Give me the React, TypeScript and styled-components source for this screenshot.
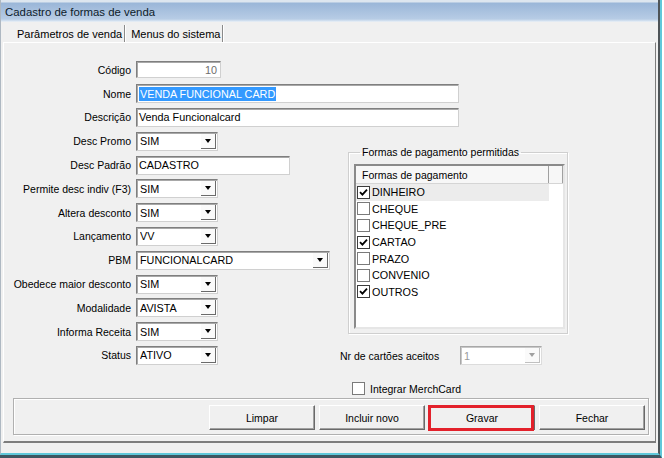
import React from "react";
import styled, { createGlobalStyle } from "styled-components";

const GlobalStyle = createGlobalStyle`
  html, body { margin: 0; padding: 0; background: #ffffff; }
  body { font-family: "Liberation Sans", Arial, sans-serif; font-size: 10.5px; color: #000; }
  * { box-sizing: border-box; }
`;

const Window = styled.div`
  width: 664px;
  height: 458px;
  background: #ffffff;
  padding-right: 2px;
  overflow: hidden;
`;

const Frame = styled.div`
  width: 662px;
  height: 458px;
  border-right: 2px solid #5fc8da;
  border-bottom: 3px solid #3d5661;
`;

const Body = styled.div`
  height: 100%;
  display: flex;
  flex-direction: column;
  background: #f0f0f0;
  border-left: 1px solid #aeb8c2;
  border-right: 2px solid #4e5458;
  border-bottom: 2px solid #5fc8da;
`;

const TitleBar = styled.div`
  height: 22px;
  flex: none;
  display: flex;
  align-items: center;
  padding-left: 4px;
  padding-top: 2px;
  font-size: 11.4px;
  color: #0d1b2a;
  background: linear-gradient(to bottom, #dde6ef 0, #dde6ef 2px, #9ab6d8 3px, #b7cce5 19px, #d6e3f1 21px, #eef2f6 22px);
`;

const TabStrip = styled.div`
  height: 20px;
  flex: none;
  display: flex;
  align-items: flex-end;
  padding-left: 4px;
`;

const Tab = styled.div<{ $pad: number }>`
  height: 17px;
  display: flex;
  align-items: center;
  padding-left: ${(p) => p.$pad}px;
  padding-right: 2px;
  border-right: 1px solid #8a8a8a;
  box-shadow: 1px 0 0 #ffffff;
  margin-right: 2px;
  white-space: nowrap;
  font-size: 11px;
`;

const TabPanel = styled.div`
  flex: 1;
  margin: 0 2px 10px 2px;
  display: flex;
  flex-direction: column;
  border-top: 1px solid #ffffff;
  border-left: 1px solid #ffffff;
  border-right: 1px solid #7d7d7d;
  border-bottom: 2px solid #7d7d7d;
`;

const Content = styled.div`
  flex: 1;
  display: flex;
`;

const FormColumn = styled.div`
  width: 336px;
  flex: none;
  padding-top: 15px;
  display: flex;
  flex-direction: column;
`;

const Row = styled.div`
  height: 23.8px;
  display: flex;
  align-items: center;
`;

const Label = styled.div`
  width: 127px;
  flex: none;
  text-align: right;
  margin-right: 5px;
  white-space: nowrap;
`;

const Field = styled.div<{ $w: number; $h?: number; $muted?: boolean; $right?: boolean }>`
  width: ${(p) => p.$w}px;
  height: ${(p) => p.$h ?? 19}px;
  flex: none;
  background: #ffffff;
  border: 1px solid;
  border-color: #7f7f7f #d0d0d0 #d0d0d0 #7f7f7f;
  box-shadow: inset 1px 1px 0 #a8a8a8;
  display: flex;
  align-items: center;
  justify-content: ${(p) => (p.$right ? "flex-end" : "flex-start")};
  padding: 0 3px 0 2px;
  font-size: 10.8px;
  color: ${(p) => (p.$muted ? "#6d6d6d" : "#000")};
  white-space: nowrap;
  overflow: hidden;
`;

const Selected = styled.span`
  background: #3399ff;
  color: #ffffff;
  padding: 0 1px;
  line-height: 14px;
`;

const Combo = styled.div<{ $w: number; $disabled?: boolean }>`
  width: ${(p) => p.$w}px;
  height: 19px;
  flex: none;
  background: #ffffff;
  border: 1px solid;
  border-color: ${(p) => (p.$disabled ? "#a8a8a8 #dcdcdc #dcdcdc #a8a8a8" : "#7f7f7f #d0d0d0 #d0d0d0 #7f7f7f")};
  box-shadow: inset 1px 1px 0 ${(p) => (p.$disabled ? "#c8c8c8" : "#a8a8a8")};
  display: flex;
  align-items: center;
  padding: 1px 1px 1px 3px;
  font-size: 10.8px;
  color: ${(p) => (p.$disabled ? "#9a9a9a" : "#000")};
`;

const ComboValue = styled.div`
  flex: 1;
  white-space: nowrap;
  overflow: hidden;
`;

const DropButton = styled.div<{ $disabled?: boolean }>`
  width: 15px;
  height: 15px;
  flex: none;
  display: flex;
  align-items: center;
  justify-content: center;
  background: #fafafa;
  border-right: 1px solid ${(p) => (p.$disabled ? "#c0c0c0" : "#6a6a6a")};
  border-bottom: 1px solid ${(p) => (p.$disabled ? "#c0c0c0" : "#6a6a6a")};
`;

const Arrow = styled.div<{ $disabled?: boolean }>`
  width: 0;
  height: 0;
  border-left: 3.5px solid transparent;
  border-right: 3.5px solid transparent;
  border-top: 4px solid ${(p) => (p.$disabled ? "#a0a0a0" : "#000")};
`;

const SideColumn = styled.div`
  flex: 1;
  display: flex;
  flex-direction: column;
`;

const Group = styled.fieldset`
  margin: 102px 0 0 8px;
  width: 220px;
  height: 189px;
  padding: 5px 2px 4px 5px;
  border: 1px solid #cfcfcf;
  box-shadow: inset 1px 1px 0 #ffffff, 1px 1px 0 #ffffff;
`;

const Legend = styled.legend`
  padding: 0 2px;
  margin-left: 6px;
  line-height: 14px;
`;

const ListView = styled.div`
  width: 211px;
  height: 165px;
  background: #ffffff;
  border: 2px solid;
  border-color: #8a8a8a #e6e6e6 #e6e6e6 #8a8a8a;
  display: flex;
  flex-direction: column;
`;

const ListHeader = styled.div`
  height: 18px;
  flex: none;
  display: flex;
  background: #f7f7f7;
  border-bottom: 1px solid #d5d5d5;
`;

const HeaderCell = styled.div<{ $w?: number }>`
  ${(p) => (p.$w ? `width: ${p.$w}px; flex: none;` : "flex: 1;")}
  display: flex;
  align-items: center;
  padding-left: 6px;
  border-right: 1px solid #a0a0a0;
`;

const ListRow = styled.div<{ $hl?: boolean }>`
  height: 16.6px;
  width: 193px;
  display: flex;
  align-items: center;
  padding-left: 1px;
  background: ${(p) => (p.$hl ? "#ececec" : "transparent")};
`;

const CheckBox = styled.div<{ $checked?: boolean }>`
  width: 13px;
  height: 13px;
  flex: none;
  background: #ffffff;
  border: 1px solid ${(p) => (p.$checked ? "#3c3c3c" : "#7a7a7a")};
  display: flex;
  align-items: center;
  justify-content: center;
  margin-right: 2px;
`;

const ItemText = styled.span`
  line-height: 14px;
  font-size: 10.8px;
`;

const CardsRow = styled.div`
  margin-top: 12px;
  display: flex;
  align-items: center;
`;

const CardsLabel = styled.div`
  width: 120px;
  flex: none;
  white-space: nowrap;
`;

const MerchRow = styled.div`
  margin-top: 17px;
  margin-left: 12px;
  display: flex;
  align-items: center;
  gap: 3px;
`;

const ButtonBar = styled.div`
  flex: none;
  height: 37px;
  margin: 0 6px 6px 9px;
  display: flex;
  justify-content: flex-end;
  gap: 4px;
  padding: 6px 3px 4px 3px;
  border: 1px solid #b0b0b0;
  box-shadow: inset 1px 1px 0 #ffffff, 1px 1px 0 #ffffff;
`;

const Button = styled.div`
  position: relative;
  width: 106px;
  height: 25px;
  display: flex;
  align-items: center;
  justify-content: center;
  background: #f0f0f0;
  border: 1px solid;
  border-color: #ffffff #6a6a6a #6a6a6a #ffffff;
  box-shadow: inset -1px -1px 0 #a0a0a0;
`;

const Highlight = styled.div`
  position: absolute;
  left: -2px;
  top: -1px;
  right: 0px;
  bottom: -2px;
  border: 3px solid #e3212b;
  pointer-events: none;
`;

const Check = () => (
  <svg width="9" height="9" viewBox="0 0 9 9">
    <path d="M1 4.2 L3.4 6.6 L8 1.6" fill="none" stroke="#000" strokeWidth="1.8" />
  </svg>
);

const DropDown = ({ w, value, disabled }: { w: number; value: string; disabled?: boolean }) => (
  <Combo $w={w} $disabled={disabled}>
    <ComboValue>{value}</ComboValue>
    <DropButton $disabled={disabled}>
      <Arrow $disabled={disabled} />
    </DropButton>
  </Combo>
);

const payments: { name: string; checked: boolean }[] = [
  { name: "DINHEIRO", checked: true },
  { name: "CHEQUE", checked: false },
  { name: "CHEQUE_PRE", checked: false },
  { name: "CARTAO", checked: true },
  { name: "PRAZO", checked: false },
  { name: "CONVENIO", checked: false },
  { name: "OUTROS", checked: true },
];

const combos: { label: string; value: string; w: number }[] = [
  { label: "Permite desc indiv (F3)", value: "SIM", w: 82 },
  { label: "Altera desconto", value: "SIM", w: 82 },
  { label: "Lançamento", value: "VV", w: 82 },
  { label: "PBM", value: "FUNCIONALCARD", w: 194 },
  { label: "Obedece maior desconto", value: "SIM", w: 82 },
  { label: "Modalidade", value: "AVISTA", w: 82 },
  { label: "Informa Receita", value: "SIM", w: 82 },
  { label: "Status", value: "ATIVO", w: 82 },
];

export default function App() {
  return (
    <>
      <GlobalStyle />
      <Window>
        <Frame>
          <Body>
            <TitleBar>Cadastro de formas de venda</TitleBar>
            <TabStrip>
              <Tab $pad={12}>Parâmetros de venda</Tab>
              <Tab $pad={4}>Menus do sistema</Tab>
            </TabStrip>
            <TabPanel>
              <Content>
                <FormColumn>
                  <Row>
                    <Label>Código</Label>
                    <Field $w={85} $h={17} $muted $right>10</Field>
                  </Row>
                  <Row>
                    <Label>Nome</Label>
                    <Field $w={323}>
                      <Selected>VENDA FUNCIONAL CARD</Selected>
                    </Field>
                  </Row>
                  <Row>
                    <Label>Descrição</Label>
                    <Field $w={323}>Venda Funcionalcard</Field>
                  </Row>
                  <Row>
                    <Label>Desc Promo</Label>
                    <DropDown w={82} value="SIM" />
                  </Row>
                  <Row>
                    <Label>Desc Padrão</Label>
                    <Field $w={154}>CADASTRO</Field>
                  </Row>
                  {combos.map((c) => (
                    <Row key={c.label}>
                      <Label>{c.label}</Label>
                      <DropDown w={c.w} value={c.value} />
                    </Row>
                  ))}
                </FormColumn>
                <SideColumn>
                  <Group>
                    <Legend>Formas de pagamento permitidas</Legend>
                    <ListView>
                      <ListHeader>
                        <HeaderCell $w={193}>Formas de pagamento</HeaderCell>
                        <HeaderCell />
                      </ListHeader>
                      {payments.map((p, i) => (
                        <ListRow key={p.name} $hl={i === 0}>
                          <CheckBox $checked={p.checked}>{p.checked && <Check />}</CheckBox>
                          <ItemText>{p.name}</ItemText>
                        </ListRow>
                      ))}
                    </ListView>
                  </Group>
                  <CardsRow>
                    <CardsLabel>Nr de cartões aceitos</CardsLabel>
                    <DropDown w={82} value="1" disabled />
                  </CardsRow>
                  <MerchRow>
                    <CheckBox />
                    <span>Integrar MerchCard</span>
                  </MerchRow>
                </SideColumn>
              </Content>
              <ButtonBar>
                <Button>Limpar</Button>
                <Button>Incluir novo</Button>
                <Button>
                  Gravar
                  <Highlight />
                </Button>
                <Button>Fechar</Button>
              </ButtonBar>
            </TabPanel>
          </Body>
        </Frame>
      </Window>
    </>
  );
}
